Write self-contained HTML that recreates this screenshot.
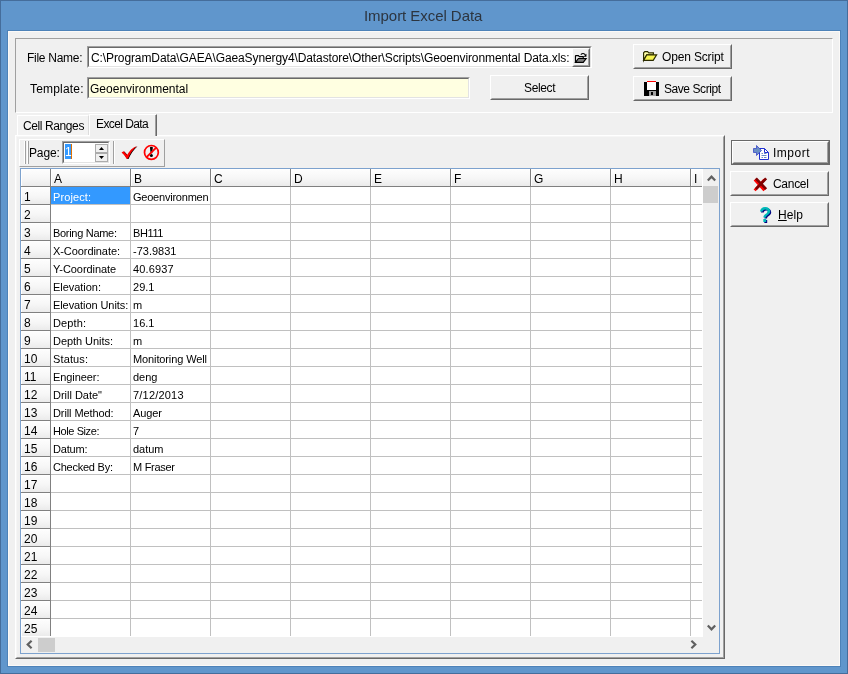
<!DOCTYPE html>
<html lang="en"><head><meta charset="utf-8"><title>Import Excel Data</title>
<style>
html,body{margin:0;padding:0}
body{width:848px;height:674px;position:relative;overflow:hidden;background:#6096cc;font-family:"Liberation Sans",sans-serif;font-size:12px;color:#000}
*{box-sizing:border-box}
.frame{position:absolute;left:0;top:0;width:848px;height:674px;border:1px solid #456d9b}
.frame2{position:absolute;left:7px;top:30px;width:834px;height:637px;border:1px solid #4d82b8}
.title{will-change:transform;position:absolute;left:364px;top:6px;white-space:nowrap;font-size:15px;color:#2c3540;line-height:20px}
.client{will-change:transform;position:absolute;left:8px;top:31px;width:832px;height:635px;background:#f0f0f0;box-shadow:inset 0 0 0 1px #fbf9f7}
.client>*,.edit>*,.btn>*{position:absolute}
.abs{position:absolute}
.t{position:absolute;white-space:nowrap;line-height:14px;font-size:12px}
.bevel{position:absolute;border:1px solid;border-color:#a0a0a0 #fff #fff #a0a0a0}
.edit{position:absolute;background:#fff;border:1px solid;border-color:#a0a0a0 #fff #fff #a0a0a0}
.edit:before{content:"";position:absolute;left:0;top:0;right:0;bottom:0;border:1px solid;border-color:#696969 #e3e3e3 #e3e3e3 #696969}
.btn{position:absolute;background:#f0f0f0;border:1px solid;border-color:#fff #696969 #696969 #fff}
.btn:before{content:"";position:absolute;left:0;top:0;right:0;bottom:0;border:1px solid;border-color:#f0f0f0 #a0a0a0 #a0a0a0 #f0f0f0}
.btn.def{border-color:#696969}
.btn.def:before{border-color:#fff #696969 #696969 #fff}
.btn.def:after{content:"";position:absolute;left:1px;top:1px;right:1px;bottom:1px;border:1px solid;border-color:#f0f0f0 #a0a0a0 #a0a0a0 #f0f0f0}
.spb{position:absolute;background:#f0f0f0;border:1px solid #acacac}
svg{position:absolute;overflow:visible}
.grid{position:absolute;left:12px;top:137px;width:700px;height:486px;border:1px solid #7da2ce;background:#fff;overflow:hidden;font-size:11px}
.grid>*{position:absolute}
.hdr,.rn{background:linear-gradient(#fdfdfd,#f6f6f6 55%,#ebebeb);border-top:1px solid #fff;border-left:1px solid #fff}
.hdr span{position:absolute;left:2px;top:2px;font-size:12px;line-height:14px;white-space:nowrap}
.rn{left:0;width:29px;height:17px}
.rn span{position:absolute;left:2px;top:2px;font-size:12px;line-height:14px;white-space:nowrap}
.vl{top:18px;width:1px;height:449px;background:#c0c0c0}
.hl{left:30px;width:651px;height:1px;background:#c0c0c0}
.rl{left:0;width:30px;height:1px;background:#808080}
.cl{top:0;width:1px;height:18px;background:#808080}
.ghl{height:1px;background:#808080}
.gvl{width:1px;background:#808080}
.sel{background:#3399ff}
.ct{white-space:nowrap;line-height:13px;margin-top:4px;font-size:11px}
.ct.w{color:#fff}
.sb{background:#f0f0f0}
.thumb{background:#cdcdcd}

</style></head>
<body>
<div class="frame"></div>
<div class="frame2"></div>
<div class="title" style="letter-spacing:-0.051px">Import Excel Data</div>
<div class="client">
<div class="bevel" style="left:7px;top:7px;width:818px;height:75px"></div>
<span class="t" style="letter-spacing:-0.28px;left:19px;top:20px">File Name:</span>
<div class="edit" style="left:79px;top:15px;width:505px;height:22px"><span class="t" style="letter-spacing:-0.102px;left:3px;top:4px">C:\ProgramData\GAEA\GaeaSynergy4\Datastore\Other\Scripts\Geoenvironmental Data.xls:</span>
<div class="btn" style="left:484px;top:1px;width:18px;height:19px"><svg style="left:1.2px;top:2.8px" width="13.6" height="12" viewBox="0 0 14 12"><path d="M1.5 10.5 V4 Q1.5 3.5 2 3.5 H4.5 L5.5 4.5 H9.5 V6.5" fill="none" stroke="#000" stroke-width="1.2"/><path d="M1.5 10.5 L4.5 6.5 H12.5 L9.5 10.5 Z" fill="#808080" stroke="#000" stroke-width="1.2"/><path d="M7 2.5 Q9 0.5 11 2 L12 3.5" fill="none" stroke="#000" stroke-width="1.1"/><path d="M12.8 1.5 V4.8 H9.8 Z" fill="#000"/></svg></div></div>
<span class="t" style="letter-spacing:0.184px;left:22px;top:51px">Template:</span>
<div class="edit" style="left:79px;top:46px;width:383px;height:22px;background:#ffffe1"><span class="t" style="letter-spacing:0.009px;left:2px;top:4px">Geoenvironmental</span></div>
<div class="btn" style="left:482px;top:44px;width:99px;height:25px"><span class="t" style="letter-spacing:-0.372px;left:33px;top:5px">Select</span></div>
<div class="btn" style="left:625px;top:13px;width:99px;height:25px"><svg style="left:9px;top:6px" width="15" height="11" viewBox="0 0 15 11"><path d="M0.6 9.4 V1.8 L1.8 0.6 H4.6 L5.8 1.8 H10.4 V3.8 H3.8 L0.6 9.4 Z" fill="#ffffa8" stroke="#2c2c00" stroke-width="1.2"/><path d="M0.6 9.4 L3.8 3.8 H13.6 L10.2 9.4 Z" fill="#f6f450" stroke="#2c2c00" stroke-width="1.2"/></svg><span class="t" style="letter-spacing:-0.158px;left:28px;top:5px">Open Script</span></div>
<div class="btn" style="left:625px;top:45px;width:99px;height:25px"><svg style="left:10px;top:4px" width="16" height="16" viewBox="0 0 16 16" shape-rendering="crispEdges"><rect x="0" y="1" width="15" height="14" rx="1" fill="#000"/><rect x="3" y="1" width="9" height="8" fill="#fff"/><rect x="3" y="0" width="9" height="1" fill="#ff0000"/><rect x="5" y="10" width="7" height="5" fill="#a0a0a0"/><rect x="7" y="11" width="2" height="3" fill="#000"/></svg><span class="t" style="letter-spacing:-0.436px;left:30px;top:5px">Save Script</span></div>
<!-- tabs -->
<div class="abs" style="left:9px;top:84px;width:72px;height:20px;border-top:1px solid #fff;border-left:1px solid #fff;border-right:1px solid #dcdcdc;background:#f3f3f3"></div>
<span class="t" style="letter-spacing:-0.398px;left:15px;top:88px">Cell Ranges</span>
<div class="abs" style="left:7px;top:104px;width:710px;height:524px;border:1px solid;border-color:#fff #696969 #696969 #fff"></div>
<div class="abs" style="left:8px;top:105px;width:708px;height:522px;border:1px solid;border-color:#f6f6f6 #a0a0a0 #a0a0a0 #f6f6f6"></div>
<div class="abs" style="left:81px;top:83px;width:68px;height:22px;background:#f0f0f0;border-top:1px solid #fff;border-left:1px solid #fff;border-right:1px solid #696969;border-radius:1px 0 0 0"></div>
<div class="abs" style="left:147px;top:84px;width:1px;height:21px;background:#a0a0a0"></div>
<div class="abs" style="left:82px;top:105px;width:65px;height:1px;background:#f0f0f0"></div>
<span class="t" style="letter-spacing:-0.592px;left:88px;top:86px">Excel Data</span>
<!-- toolbar -->
<div class="abs" style="left:11px;top:108px;width:146px;height:28px;border:1px solid;border-color:#fff #a0a0a0 #a0a0a0 #fff"></div>
<div class="abs" style="left:16px;top:110px;width:2px;height:23px;border-left:1px solid #fff;border-right:1px solid #a0a0a0"></div>
<div class="abs" style="left:19px;top:110px;width:2px;height:23px;border-left:1px solid #fff;border-right:1px solid #a0a0a0"></div>
<span class="t" style="letter-spacing:-0.14px;left:21px;top:115px">Page:</span>
<div class="edit" style="left:54px;top:110px;width:48px;height:23px"><div class="abs" style="left:2px;top:2px;width:6px;height:15px;background:#3399ff"></div><div class="abs" style="left:8px;top:2px;width:1px;height:15px;background:#e07000"></div><span class="t" style="left:2px;top:3px;color:#fff">1</span>
<div class="spb" style="left:32px;top:2px;width:13px;height:9px"><svg style="left:3px;top:2px" width="5" height="3" viewBox="0 0 5 3"><path d="M0 3 L2.5 0 L5 3 Z" fill="#000"/></svg></div><div class="spb" style="left:32px;top:11px;width:13px;height:9px"><svg style="left:3px;top:2px" width="5" height="3" viewBox="0 0 5 3"><path d="M0 0 L2.5 3 L5 0 Z" fill="#000"/></svg></div></div>
<div class="abs" style="left:105px;top:110px;width:2px;height:23px;border-left:1px solid #a0a0a0;border-right:1px solid #fff"></div>
<svg style="left:112.5px;top:115px" width="16.5" height="13.2" viewBox="0 0 17 14"><path d="M0.3 6.8 L2.6 5.6 L6.2 9.6 C8.4 5.4 12 1.6 16.6 0 C12.6 3.6 9.2 8.4 7 13.6 L5.6 13.6 C4.2 10.6 2.4 8.4 0.3 6.8 Z" fill="#000" transform="translate(0.7,0.3)"/><path d="M0.3 6.8 L2.6 5.6 L6.2 9.6 C8.4 5.4 12 1.6 16.6 0 C12.6 3.6 9.2 8.4 7 13.6 L5.6 13.6 C4.2 10.6 2.4 8.4 0.3 6.8 Z" fill="#ff0000"/></svg>
<svg style="left:135px;top:113px" width="17" height="17" viewBox="0 0 17 17"><path d="M6.9 3.2 Q8.4 2.2 9.9 3.2 L9.2 9.2 H7.6 Z" fill="#000"/><circle cx="8.4" cy="11.6" r="1.5" fill="#000"/><circle cx="8.4" cy="8.4" r="6.9" fill="none" stroke="#ff0000" stroke-width="1.7"/><path d="M3.6 13.2 L13.2 3.6" stroke="#ff0000" stroke-width="1.9"/></svg>
<div class="grid">
<div class="hdr corner" style="left:0;top:0;width:29px;height:17px"></div>
<div class="hdr" style="left:30px;top:0;width:79px;height:17px"><span>A</span></div>
<div class="hdr" style="left:110px;top:0;width:79px;height:17px"><span>B</span></div>
<div class="hdr" style="left:190px;top:0;width:79px;height:17px"><span>C</span></div>
<div class="hdr" style="left:270px;top:0;width:79px;height:17px"><span>D</span></div>
<div class="hdr" style="left:350px;top:0;width:79px;height:17px"><span>E</span></div>
<div class="hdr" style="left:430px;top:0;width:79px;height:17px"><span>F</span></div>
<div class="hdr" style="left:510px;top:0;width:79px;height:17px"><span>G</span></div>
<div class="hdr" style="left:590px;top:0;width:79px;height:17px"><span>H</span></div>
<div class="hdr" style="left:670px;top:0;width:11px;height:17px"><span>I</span></div>
<div class="rn" style="top:18px"><span>1</span></div>
<div class="rn" style="top:36px"><span>2</span></div>
<div class="rn" style="top:54px"><span>3</span></div>
<div class="rn" style="top:72px"><span>4</span></div>
<div class="rn" style="top:90px"><span>5</span></div>
<div class="rn" style="top:108px"><span>6</span></div>
<div class="rn" style="top:126px"><span>7</span></div>
<div class="rn" style="top:144px"><span>8</span></div>
<div class="rn" style="top:162px"><span>9</span></div>
<div class="rn" style="top:180px"><span>10</span></div>
<div class="rn" style="top:198px"><span>11</span></div>
<div class="rn" style="top:216px"><span>12</span></div>
<div class="rn" style="top:234px"><span>13</span></div>
<div class="rn" style="top:252px"><span>14</span></div>
<div class="rn" style="top:270px"><span>15</span></div>
<div class="rn" style="top:288px"><span>16</span></div>
<div class="rn" style="top:306px"><span>17</span></div>
<div class="rn" style="top:324px"><span>18</span></div>
<div class="rn" style="top:342px"><span>19</span></div>
<div class="rn" style="top:360px"><span>20</span></div>
<div class="rn" style="top:378px"><span>21</span></div>
<div class="rn" style="top:396px"><span>22</span></div>
<div class="rn" style="top:414px"><span>23</span></div>
<div class="rn" style="top:432px"><span>24</span></div>
<div class="rn" style="top:450px"><span>25</span></div>
<i class="vl" style="left:109px"></i><i class="vl" style="left:189px"></i><i class="vl" style="left:269px"></i><i class="vl" style="left:349px"></i><i class="vl" style="left:429px"></i><i class="vl" style="left:509px"></i><i class="vl" style="left:589px"></i><i class="vl" style="left:669px"></i>
<i class="hl" style="top:35px"></i><i class="hl" style="top:53px"></i><i class="hl" style="top:71px"></i><i class="hl" style="top:89px"></i><i class="hl" style="top:107px"></i><i class="hl" style="top:125px"></i><i class="hl" style="top:143px"></i><i class="hl" style="top:161px"></i><i class="hl" style="top:179px"></i><i class="hl" style="top:197px"></i><i class="hl" style="top:215px"></i><i class="hl" style="top:233px"></i><i class="hl" style="top:251px"></i><i class="hl" style="top:269px"></i><i class="hl" style="top:287px"></i><i class="hl" style="top:305px"></i><i class="hl" style="top:323px"></i><i class="hl" style="top:341px"></i><i class="hl" style="top:359px"></i><i class="hl" style="top:377px"></i><i class="hl" style="top:395px"></i><i class="hl" style="top:413px"></i><i class="hl" style="top:431px"></i><i class="hl" style="top:449px"></i>
<div class="sel" style="left:30px;top:18px;width:79px;height:17px"></div>
<span class="ct w" style="letter-spacing:0.1px;left:32px;top:18px">Project:</span><span class="ct" style="letter-spacing:-0.223px;left:112px;top:18px">Geoenvironmen</span>

<span class="ct" style="letter-spacing:-0.297px;left:32px;top:54px">Boring Name:</span><span class="ct" style="letter-spacing:-0.379px;left:112px;top:54px">BH111</span>
<span class="ct" style="letter-spacing:-0.073px;left:32px;top:72px">X-Coordinate:</span><span class="ct" style="letter-spacing:0.009px;left:112px;top:72px">-73.9831</span>
<span class="ct" style="letter-spacing:-0.056px;left:32px;top:90px">Y-Coordinate</span><span class="ct" style="letter-spacing:0.122px;left:112px;top:90px">40.6937</span>
<span class="ct" style="letter-spacing:-0.035px;left:32px;top:108px">Elevation:</span><span class="ct" style="letter-spacing:0.026px;left:112px;top:108px">29.1</span>
<span class="ct" style="letter-spacing:-0.082px;left:32px;top:126px">Elevation Units:</span><span class="ct" style="left:112px;top:126px">m</span>
<span class="ct" style="letter-spacing:0.116px;left:32px;top:144px">Depth:</span><span class="ct" style="letter-spacing:0.026px;left:112px;top:144px">16.1</span>
<span class="ct" style="letter-spacing:-0.048px;left:32px;top:162px">Depth Units:</span><span class="ct" style="left:112px;top:162px">m</span>
<span class="ct" style="letter-spacing:0.125px;left:32px;top:180px">Status:</span><span class="ct" style="letter-spacing:-0.115px;left:112px;top:180px">Monitoring Well</span>
<span class="ct" style="letter-spacing:-0.074px;left:32px;top:198px">Engineer:</span><span class="ct" style="letter-spacing:0.005px;left:112px;top:198px">deng</span>
<span class="ct" style="letter-spacing:-0.014px;left:32px;top:216px">Drill Date&quot;</span><span class="ct" style="letter-spacing:0.195px;left:112px;top:216px">7/12/2013</span>
<span class="ct" style="letter-spacing:-0.096px;left:32px;top:234px">Drill Method:</span><span class="ct" style="letter-spacing:-0.09px;left:112px;top:234px">Auger</span>
<span class="ct" style="letter-spacing:-0.405px;left:32px;top:252px">Hole Size:</span><span class="ct" style="left:112px;top:252px">7</span>
<span class="ct" style="letter-spacing:-0.194px;left:32px;top:270px">Datum:</span><span class="ct" style="letter-spacing:-0.02px;left:112px;top:270px">datum</span>
<span class="ct" style="letter-spacing:-0.237px;left:32px;top:288px">Checked By:</span><span class="ct" style="letter-spacing:-0.286px;left:112px;top:288px">M Fraser</span>
<i class="rl" style="top:35px"></i><i class="rl" style="top:53px"></i><i class="rl" style="top:71px"></i><i class="rl" style="top:89px"></i><i class="rl" style="top:107px"></i><i class="rl" style="top:125px"></i><i class="rl" style="top:143px"></i><i class="rl" style="top:161px"></i><i class="rl" style="top:179px"></i><i class="rl" style="top:197px"></i><i class="rl" style="top:215px"></i><i class="rl" style="top:233px"></i><i class="rl" style="top:251px"></i><i class="rl" style="top:269px"></i><i class="rl" style="top:287px"></i><i class="rl" style="top:305px"></i><i class="rl" style="top:323px"></i><i class="rl" style="top:341px"></i><i class="rl" style="top:359px"></i><i class="rl" style="top:377px"></i><i class="rl" style="top:395px"></i><i class="rl" style="top:413px"></i><i class="rl" style="top:431px"></i><i class="rl" style="top:449px"></i><i class="rl" style="top:17px;width:681px"></i><i class="gvl" style="left:29px;top:0;height:467px"></i><i class="cl" style="left:109px"></i><i class="cl" style="left:189px"></i><i class="cl" style="left:269px"></i><i class="cl" style="left:349px"></i><i class="cl" style="left:429px"></i><i class="cl" style="left:509px"></i><i class="cl" style="left:589px"></i><i class="cl" style="left:669px"></i><i class="cl" style="left:749px"></i>
<div class="sb" style="left:682px;top:0;width:16px;height:468px"></div>
<svg style="left:685.5px;top:6px" width="9" height="7" viewBox="0 0 9 7"><path d="M0.8 5.6 L4.5 1.7 L8.2 5.6" fill="none" stroke="#606060" stroke-width="2.2"/></svg>
<div class="thumb" style="left:682px;top:17px;width:15px;height:17px"></div>
<svg style="left:685.5px;top:455px" width="9" height="7" viewBox="0 0 9 7"><path d="M0.8 1.4 L4.5 5.3 L8.2 1.4" fill="none" stroke="#606060" stroke-width="2.2"/></svg>
<div class="sb" style="left:0;top:468px;width:698px;height:16px"></div>
<svg style="left:5px;top:471px" width="7" height="9" viewBox="0 0 7 9"><path d="M5.6 0.8 L1.7 4.5 L5.6 8.2" fill="none" stroke="#606060" stroke-width="2.2"/></svg>
<div class="thumb" style="left:17px;top:469px;width:17px;height:14px"></div>
<svg style="left:669px;top:471px" width="7" height="9" viewBox="0 0 7 9"><path d="M1.4 0.8 L5.3 4.5 L1.4 8.2" fill="none" stroke="#606060" stroke-width="2.2"/></svg>
</div>
<div class="btn def" style="left:723px;top:109px;width:99px;height:25px"><svg style="left:21px;top:4px" width="17" height="16" viewBox="0 0 17 16"><path d="M6.5 3.5 H11.5 L15.5 7.5 V14.5 H6.5 Z" fill="#fff" stroke="#2030d0" stroke-width="1"/><path d="M11.5 3.5 V7.5 H15.5" fill="none" stroke="#2030d0" stroke-width="1"/><path d="M8.5 8.5 H10 M11 8.5 H13.5 M8.5 10.5 H13.5 M8.5 12.5 H10 M11 12.5 H13.5" stroke="#6a8cc8" stroke-width="1"/><path d="M0.5 3.5 H3.5 V0.5 L8.5 5.5 L3.5 10.5 V7.5 H0.5 Z" fill="#6a8fc4" stroke="#3848c8" stroke-width="0.8"/></svg><span class="t" style="letter-spacing:0.497px;left:41px;top:5px">Import</span></div>
<div class="btn" style="left:722px;top:140px;width:99px;height:25px"><svg style="left:23px;top:5px" width="14" height="14" viewBox="0 0 15 15"><path d="M1.5 2 L12 13.5 M12 2 L1.5 13.5" stroke="#ff0000" stroke-width="3" transform="translate(-0.8,0.8)"/><path d="M2 1.5 L13 13 M13 1.5 L2 13" stroke="#800000" stroke-width="3"/></svg><span class="t" style="letter-spacing:-0.292px;left:42px;top:5px">Cancel</span></div>
<div class="btn" style="left:722px;top:171px;width:99px;height:25px"><span class="t q" style="left:28px;top:0px;font-size:22px;line-height:23px;transform:scaleX(0.92);transform-origin:0 0;font-weight:bold;color:#00b8b8;text-shadow:1px 1px 0 #000080">?</span><span class="t" style="letter-spacing:0.071px;left:47px;top:5px"><u>H</u>elp</span></div>
</div>
</body></html>
